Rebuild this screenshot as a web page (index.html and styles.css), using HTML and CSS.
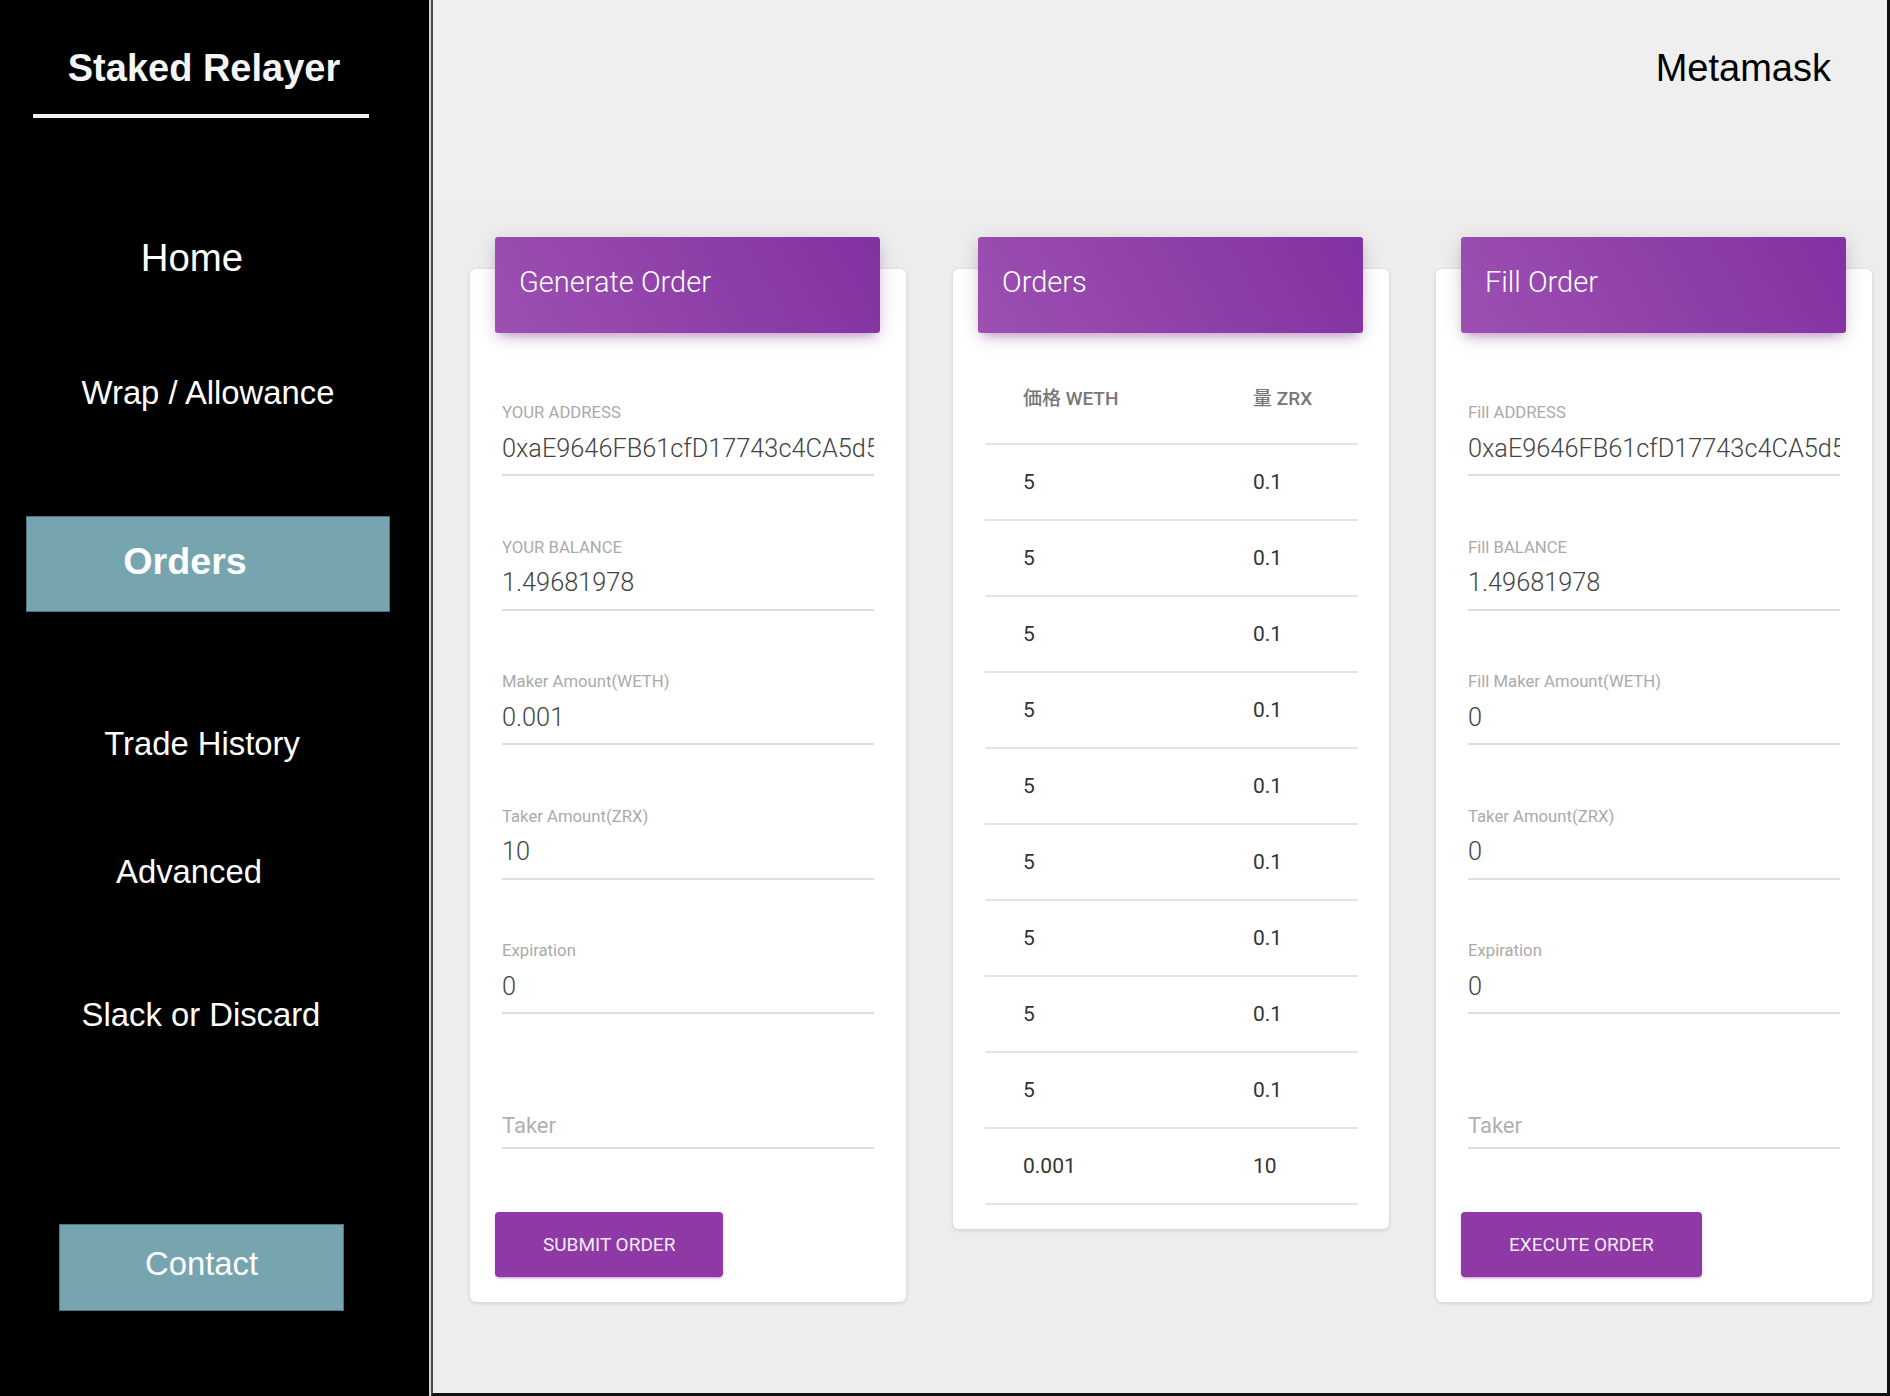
FILE: index.html
```html
<!DOCTYPE html>
<html lang="en">
<head>
<meta charset="utf-8">
<title>Staked Relayer</title>
<link rel="stylesheet" href="styles.css">
</head>
<body>
<div class="app">
  <aside class="sidebar">
    <div class="brand">Staked Relayer</div>
    <div class="brand-rule"></div>
    <nav class="nav">
      <a class="nav-item nav-home">Home</a>
      <a class="nav-item nav-wrap">Wrap / Allowance</a>
      <a class="nav-item nav-box nav-active">Orders</a>
      <a class="nav-item nav-history">Trade History</a>
      <a class="nav-item nav-advanced">Advanced</a>
      <a class="nav-item nav-slack">Slack or Discard</a>
      <a class="nav-item nav-box nav-contact">Contact</a>
    </nav>
  </aside>
  <main class="main">
    <header class="topbar"><span class="account">Metamask</span></header>
    <section class="cards">
      <div class="card">
        <div class="card-header"><h4 class="card-title">Generate Order</h4></div>
        <div class="card-body form">
          <div class="field"><label class="field-label">YOUR ADDRESS</label><input class="field-value" type="text" readonly value="0xaE9646FB61cfD17743c4CA5d5a3C1b9e2F80d7A4"></div>
          <div class="field"><label class="field-label">YOUR BALANCE</label><input class="field-value" type="text" readonly value="1.49681978"></div>
          <div class="field"><label class="field-label">Maker Amount(WETH)</label><input class="field-value" type="text" readonly value="0.001"></div>
          <div class="field"><label class="field-label">Taker Amount(ZRX)</label><input class="field-value" type="text" readonly value="10"></div>
          <div class="field"><label class="field-label">Expiration</label><input class="field-value" type="text" readonly value="0"></div>
          <div class="field"><label class="field-label"></label><div class="field-value placeholder">Taker</div></div>
          <button class="btn">SUBMIT ORDER</button>
        </div>
      </div>
      <div class="card">
        <div class="card-header"><h4 class="card-title">Orders</h4></div>
        <div class="card-body orders">
          <div class="orders-row orders-head"><span>価格 WETH</span><span>量 ZRX</span></div>
          <div class="orders-row"><span>5</span><span>0.1</span></div>
          <div class="orders-row"><span>5</span><span>0.1</span></div>
          <div class="orders-row"><span>5</span><span>0.1</span></div>
          <div class="orders-row"><span>5</span><span>0.1</span></div>
          <div class="orders-row"><span>5</span><span>0.1</span></div>
          <div class="orders-row"><span>5</span><span>0.1</span></div>
          <div class="orders-row"><span>5</span><span>0.1</span></div>
          <div class="orders-row"><span>5</span><span>0.1</span></div>
          <div class="orders-row"><span>5</span><span>0.1</span></div>
          <div class="orders-row"><span>0.001</span><span>10</span></div>
        </div>
      </div>
      <div class="card">
        <div class="card-header"><h4 class="card-title">Fill Order</h4></div>
        <div class="card-body form">
          <div class="field"><label class="field-label">Fill ADDRESS</label><input class="field-value" type="text" readonly value="0xaE9646FB61cfD17743c4CA5d5a3C1b9e2F80d7A4"></div>
          <div class="field"><label class="field-label">Fill BALANCE</label><input class="field-value" type="text" readonly value="1.49681978"></div>
          <div class="field"><label class="field-label">Fill Maker Amount(WETH)</label><input class="field-value" type="text" readonly value="0"></div>
          <div class="field"><label class="field-label">Taker Amount(ZRX)</label><input class="field-value" type="text" readonly value="0"></div>
          <div class="field"><label class="field-label">Expiration</label><input class="field-value" type="text" readonly value="0"></div>
          <div class="field"><label class="field-label"></label><div class="field-value placeholder">Taker</div></div>
          <button class="btn">EXECUTE ORDER</button>
        </div>
      </div>
    </section>
  </main>
</div>
</body>
</html>
```
FILE: styles.css
```css
* { box-sizing: border-box; }
html, body { margin: 0; padding: 0; }
body { width: 1890px; height: 1396px; overflow: hidden; background: #eee; }

.app { display: flex; width: 1890px; height: 1396px; }

/* Sidebar */
.sidebar {
  width: 431px;
  flex: none;
  background: #000;
  border-right: 2px solid #d4d4d4;
  font-family: "Liberation Sans", Arial, sans-serif;
  color: #f5f5f5;
  display: flex;
  flex-direction: column;
}
.brand {
  margin: 46px 0 0 36px;
  width: 336px;
  text-align: center;
  font-size: 38px;
  font-weight: 700;
  line-height: 44px;
}
.brand-rule {
  margin: 24px 0 0 33px;
  width: 336px;
  height: 4px;
  background: #f2f2f2;
}
.nav { display: flex; flex-direction: column; align-items: flex-start; }
.nav-item {
  display: block;
  width: 402px;
  text-align: center;
  font-size: 32.8px;
  line-height: 44px;
  color: #fff;
}
.nav-home { margin-top: 118px; font-size: 38.4px; padding-right: 18px; }
.nav-wrap { margin-top: 91px; padding-left: 14px; }
.nav-box {
  background: #76a5b0;
  border: 1px solid #4f7480;
}
.nav-active {
  margin: 101px 0 0 26px;
  width: 364px;
  padding: 22px 46px 28px 0;
  font-size: 37.7px;
  font-weight: 700;
}
.nav-history { margin-top: 110px; padding-left: 2px; }
.nav-advanced { margin-top: 84px; padding-right: 24px; }
.nav-slack { margin-top: 99px; }
.nav-contact {
  margin: 187px 0 0 59px;
  width: 285px;
  padding: 17px 0 24px;
}

/* Main */
.main {
  flex: 1;
  background: #ededed;
  border-left: 2px solid #4a4a4a;
  border-right: 3px solid #111;
  border-bottom: 3px solid #111;
  font-family: Roboto, "Noto Sans CJK JP", sans-serif;
}
.topbar {
  height: 200px;
  padding: 46px 56px 0 0;
  text-align: right;
  background: #efefef;
  font-family: "Liberation Sans", Arial, sans-serif;
  font-size: 38px;
  line-height: 44px;
  color: #000;
}
.cards {
  display: flex;
  align-items: flex-start;
  gap: 47px;
  padding: 69px 0 0 37px;
}
.card {
  width: 436px;
  flex: none;
  background: #fff;
  border-radius: 6px;
  box-shadow: 0 1px 4px 0 rgba(0, 0, 0, 0.14);
}
.card-header {
  margin: -32px 26px 0 25px;
  height: 96px;
  padding: 28px 24px 0;
  border-radius: 3px;
  background: linear-gradient(60deg, #9d50b2, #8132a1);
  box-shadow: 0 4px 20px 0 rgba(0, 0, 0, 0.14), 0 7px 10px -5px rgba(156, 39, 176, 0.4);
}
.card-title {
  margin: 0;
  font-weight: 300;
  font-size: 29px;
  line-height: 35px;
  color: #fff;
}

/* Forms */
.form { padding: 70px 32px 25px; }
.field + .field { margin-top: 61.5px; }
.field-label {
  display: block;
  height: 20px;
  font-size: 16.7px;
  line-height: 20px;
  color: #aaa;
  white-space: nowrap;
}
.field-value {
  display: block;
  width: 100%;
  margin: 7px 0 0;
  height: 46px;
  padding: 1px 0 9px;
  border: none;
  border-bottom: 2px solid #dedede;
  border-radius: 0;
  background: transparent;
  outline: none;
  font-family: Roboto, sans-serif;
  font-weight: 300;
  font-size: 25.3px;
  line-height: 34px;
  color: #444;
  white-space: nowrap;
  overflow: hidden;
}
.placeholder {
  padding-top: 10px;
  padding-bottom: 9px;
  font-weight: 400;
  font-size: 22px;
  line-height: 25px;
  color: #b0b0b0;
}
.btn {
  display: inline-block;
  margin: 63.5px 0 0 -7px;
  height: 65px;
  padding: 0 48px;
  border: none;
  border-radius: 4px;
  background: #8e39a6;
  color: #f6eaf8;
  font-family: Roboto, sans-serif;
  font-size: 19px;
  font-weight: 400;
  line-height: 65px;
  box-shadow: 0 2px 2px 0 rgba(156, 39, 176, 0.14), 0 3px 1px -2px rgba(156, 39, 176, 0.2), 0 1px 5px 0 rgba(156, 39, 176, 0.12);
}

/* Orders table */
.orders { padding: 26px 31px 24px 32px; }
.orders-row {
  display: grid;
  grid-template-columns: 230px 1fr;
  align-items: center;
  height: 76px;
  padding-left: 38px;
  border-bottom: 2px solid #e4e4e4;
  font-size: 21px;
  color: #333;
}
.orders-head {
  height: 86px;
  padding-top: 21px;
  padding-bottom: 31px;
  font-size: 19px;
  font-weight: 500;
  color: #777;
}
```
